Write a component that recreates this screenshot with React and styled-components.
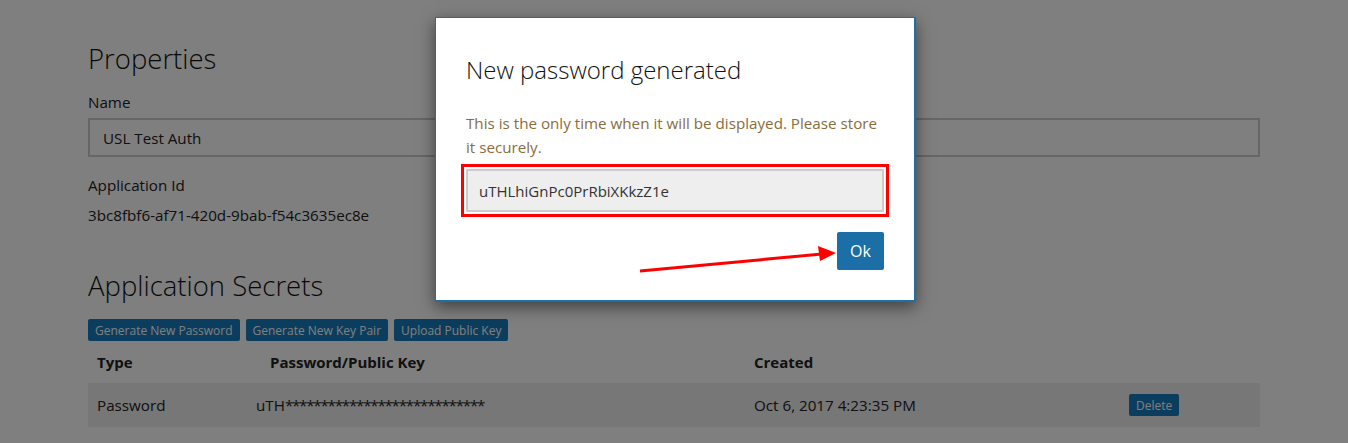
import React from 'react'
import styled, { createGlobalStyle } from 'styled-components'

const GlobalStyle = createGlobalStyle`
    html, body {
        margin: 0;
        padding: 0;
        background: #fff;
        font-family: "Open Sans", "Noto Sans", sans-serif;
        color: #222;
    }
`

const Page = styled.div`
    width: 1348px;
    height: 443px;
    overflow: hidden;
    position: relative;
`

const Content = styled.div`
    padding: 38px 88px 0 88px;
    display: flex;
    flex-direction: column;
`

const Heading = styled.h2`
    margin: ${props => props.top || 0}px 0 0 0;
    font-size: 27.5px;
    font-weight: 300;
    line-height: 42px;
    color: #111;
`

const Label = styled.div`
    font-size: 15.2px;
    line-height: 20px;
    margin-top: ${props => props.top || 0}px;
`

const Value = styled.div`
    font-size: 15.2px;
    line-height: 20px;
    margin-top: ${props => props.top || 0}px;
`

const TextBox = styled.div`
    margin-top: 6px;
    height: 35px;
    border: 2px solid #ccc;
    padding: 0 13px;
    display: flex;
    align-items: center;
    font-size: 15.2px;
`

const ButtonRow = styled.div`
    display: flex;
    gap: 6px;
    margin-top: 12px;
`

const SmallButton = styled.button`
    background: #167abc;
    color: #fff;
    border: none;
    border-radius: 2px;
    font-family: inherit;
    font-size: 12px;
    height: 22px;
    padding: 0 7px;
    cursor: pointer;
`

const Table = styled.div`
    display: grid;
    grid-template-columns: 173px 484px 375px 1fr;
`

const HeadCell = styled.div`
    font-weight: 700;
    font-size: 15px;
    padding: 0 9px;
    height: 42px;
    display: flex;
    align-items: center;
`

const Cell = styled.div`
    background: #eee;
    font-size: 15.2px;
    padding: 0 9px;
    height: 44px;
    display: flex;
    align-items: center;
`

const Masked = styled.span`
    margin-left: -14px;
`

const Stars = styled.span`
    letter-spacing: -1.25px;
`

const Overlay = styled.div`
    position: absolute;
    inset: 0;
    background: rgba(0, 0, 0, 0.5);
`

const Modal = styled.div`
    position: absolute;
    left: 435px;
    top: 17px;
    width: 481px;
    height: 285px;
    box-sizing: border-box;
    background: #fff;
    border: 1px solid #1a70aa;
    border-right-width: 2px;
    border-bottom-width: 2px;
    box-shadow: 0 5px 15px rgba(0, 0, 0, 0.5);
    padding: 34px 30px 0 30px;
    display: flex;
    flex-direction: column;
`

const ModalTitle = styled.h3`
    margin: 0;
    font-size: 24px;
    font-weight: 300;
    line-height: 36px;
    color: #111;
`

const Notice = styled.p`
    margin: 23px 0 0 0;
    font-size: 15.2px;
    line-height: 24px;
    color: #8a6d3b;
`

const Highlight = styled.div`
    margin: 5px -5px 0 -5px;
    border: 3px solid #f00;
    padding: 2px;
`

const Secret = styled.div`
    height: 39px;
    background: #eee;
    border: 2px solid #ccc;
    padding: 0 11px;
    display: flex;
    align-items: center;
    font-size: 15px;
    color: #333;
`

const Footer = styled.div`
    display: flex;
    justify-content: flex-end;
    margin-top: 15px;
`

const OkButton = styled.button`
    width: 47px;
    height: 38px;
    background: #1b6fa6;
    color: #fff;
    border: none;
    border-radius: 2px;
    font-family: inherit;
    font-size: 16px;
    cursor: pointer;
`

const Arrow = styled.svg`
    position: absolute;
    left: 200px;
    top: 228px;
    overflow: visible;
`

export default function App() {
    return (
        <Page>
            <GlobalStyle />
            <Content>
                <Heading>Properties</Heading>
                <Label top={12}>Name</Label>
                <TextBox>USL Test Auth</TextBox>
                <Label top={18}>Application Id</Label>
                <Value top={10}>3bc8fbf6-af71-420d-9bab-f54c3635ec8e</Value>
                <Heading top={40}>Application Secrets</Heading>
                <ButtonRow>
                    <SmallButton>Generate New Password</SmallButton>
                    <SmallButton>Generate New Key Pair</SmallButton>
                    <SmallButton>Upload Public Key</SmallButton>
                </ButtonRow>
                <Table>
                    <HeadCell>Type</HeadCell>
                    <HeadCell>Password/Public Key</HeadCell>
                    <HeadCell>Created</HeadCell>
                    <HeadCell />
                    <Cell>Password</Cell>
                    <Cell>
                        <Masked>
                            uTH<Stars>****************************</Stars>
                        </Masked>
                    </Cell>
                    <Cell>Oct 6, 2017 4:23:35 PM</Cell>
                    <Cell>
                        <SmallButton>Delete</SmallButton>
                    </Cell>
                </Table>
            </Content>
            <Overlay />
            <Modal>
                <ModalTitle>New password generated</ModalTitle>
                <Notice>
                    This is the only time when it will be displayed. Please store it securely.
                </Notice>
                <Highlight>
                    <Secret>uTHLhiGnPc0PrRbiXKkzZ1e</Secret>
                </Highlight>
                <Footer>
                    <OkButton>Ok</OkButton>
                </Footer>
                <Arrow width="200" height="30">
                    <line x1="4" y1="25" x2="186" y2="8" stroke="#f00" strokeWidth="3" />
                    <polygon points="200,7 182,0 184,15" fill="#f00" />
                </Arrow>
            </Modal>
        </Page>
    )
}
